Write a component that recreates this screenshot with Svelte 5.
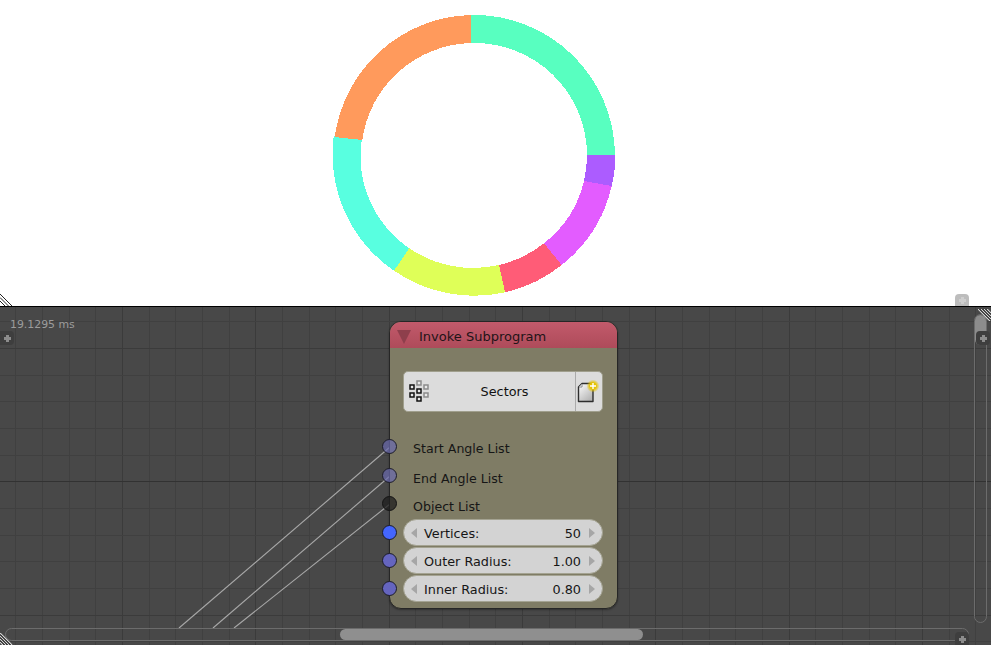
<script>
  const segments = [
    { c: '#58ffc0', d: 'M471 15 A141 141 0 0 1 615 155 L587 155 A113 112 0 0 0 471 43 Z' },
    { c: '#ac5cff', d: 'M615 155 Q615.500 171 611.700 186 L584 181 Q587 168 587 155 Z' },
    { c: '#e35cff', d: 'M611.700 186 A141 141 0 0 1 561.700 265 L544 243.300 A113 112 0 0 0 584 181 Z' },
    { c: '#ff5c77', d: 'M561.700 265 A141 141 0 0 1 505 292.300 L499 265 A113 112 0 0 0 544 243.300 Z' },
    { c: '#dfff58', d: 'M505 292.300 A141 141 0 0 1 394 270.700 L409.300 248.300 A113 112 0 0 0 499 265 Z' },
    { c: '#58ffe0', d: 'M394 270.700 A141 141 0 0 1 333.700 136 L361.700 140 A113 112 0 0 0 409.300 248.300 Z' },
    { c: '#ff9a5c', d: 'M334.700 137 A141 141 0 0 1 471 15 L471 43 A113 112 0 0 0 362.300 140 Z' }
  ];

  // Grid positions in the coordinates of the editor, whose top is y = 307.
  const step = 80 / 3;
  const vLines = Array.from({ length: 38 }, (_, i) => {
    const x = Math.round(15.3 + step * i);
    return { x, major: i % 5 === 4 };
  });
  const hLines = Array.from({ length: 13 }, (_, i) => {
    const y = Math.round(321.3 + step * i) - 307;
    return { y, major: i % 5 === 1, heavy: i === 6 };
  });

  const wires = [
    [83, 140, 179, 321],
    [83, 169, 213, 321],
    [83, 197, 234, 321]
  ];
  const squares = [
    { x: 13, y: 9, off: true },
    { x: 6, y: 13 },
    { x: 13, y: 17 },
    { x: 20, y: 13, off: true },
    { x: 6, y: 21 },
    { x: 20, y: 21, off: true },
    { x: 13, y: 25 }
  ];
  const sliders = [
    { label: 'Vertices:', value: '50', socket: 'blue' },
    { label: 'Outer Radius:', value: '1.00', socket: 'violet' },
    { label: 'Inner Radius:', value: '0.80', socket: 'violet' }
  ];
</script>

<div class="screen">
  <section class="viewport">
    <svg class="ring" width="991" height="306" viewBox="0 0 991 306" shape-rendering="crispEdges">
      {#each segments as s}
        <path d={s.d} fill={s.c} />
      {/each}
    </svg>
    <svg class="hatch hatch-viewport" width="12" height="12" viewBox="0 0 12 12">
      <path d="M0 0 L12 12 M0 3.500 L8.500 12 M0 7 L5 12" stroke="#222" stroke-width="1" fill="none" />
    </svg>
    <div class="handle"><span class="plus light"></span></div>
  </section>

  <section class="editor">
    <svg class="grid" width="991" height="338" viewBox="0 0 991 338" shape-rendering="crispEdges">
      {#each vLines as l}
        <line x1={l.x + 0.5} y1="0" x2={l.x + 0.5} y2="338" stroke={l.major ? '#3b3b3b' : '#404040'} />
      {/each}
      {#each hLines as l}
        <line x1="0" y1={l.y + 0.5} x2="991" y2={l.y + 0.5} stroke={l.heavy ? '#323232' : l.major ? '#3b3b3b' : '#404040'} />
      {/each}
    </svg>

    <svg class="wires" width="991" height="338" viewBox="0 0 991 338">
      {#each wires as w}
        <line x1={w[0] + 307} y1={w[1]} x2={w[2]} y2={w[3]} stroke="#a8a8a8" stroke-width="1.100" />
      {/each}
    </svg>

    <div class="timing">19.1295 ms</div>

    <article class="node">
      <header class="node-head">
        <span class="collapse"></span>
        <span class="title">Invoke Subprogram</span>
      </header>
      <div class="node-body">
        <div class="picker">
          <svg class="tree-icon" width="30" height="39" viewBox="0 0 30 39">
            {#each squares as q}
              <rect x={q.x} y={q.y} width="4" height="4" fill="#e8e8e8" stroke={q.off ? '#8a8a8a' : '#111'} stroke-width="1.500" />
            {/each}
          </svg>
          <span class="picker-name">Sectors</span>
          <span class="picker-new">
            <svg width="26" height="39" viewBox="0 0 26 39">
              <defs>
                <linearGradient id="page" x1="0" y1="0" x2="0.700" y2="1">
                  <stop offset="0" stop-color="#ffffff" />
                  <stop offset="1" stop-color="#b4b4b4" />
                </linearGradient>
                <radialGradient id="glow">
                  <stop offset="0.500" stop-color="#e6c300" />
                  <stop offset="1" stop-color="#e6c300" stop-opacity="0" />
                </radialGradient>
              </defs>
              <path d="M6 11.500 H17 V29.500 H2.500 V15 Z" fill="url(#page)" stroke="#2e2e2e" stroke-width="1.400" stroke-linejoin="round" />
              <path d="M3 15 L6 15 L6 12" fill="#fff" stroke="#8a8a8a" stroke-width="1" />
              <circle cx="17" cy="14" r="6.500" fill="url(#glow)" />
              <path d="M17 11 V17 M14 14 H20" stroke="#fff" stroke-width="1.400" />
            </svg>
          </span>
        </div>

        <div class="row row-first"><span class="socket faint"></span>Start Angle List</div>
        <div class="row row-second"><span class="socket faint"></span>End Angle List</div>
        <div class="row row-third"><span class="socket dark"></span>Object List</div>

        <div class="sliders">
          {#each sliders as s}
            <div class="row-slider">
              <span class="socket {s.socket}"></span>
              <div class="slider">
                <span class="arrow left"></span>
                <span class="slider-label">{s.label}</span>
                <span class="slider-value">{s.value}</span>
                <span class="arrow right"></span>
              </div>
            </div>
          {/each}
        </div>
      </div>
    </article>

    <div class="scroll-v"><div class="thumb-v"></div></div>
    <div class="scroll-h"><div class="thumb-h"></div></div>

    <div class="corner corner-left"><span class="plus"></span></div>
    <div class="corner corner-right"><span class="plus"></span></div>
    <div class="corner corner-bottom"><span class="plus"></span></div>

    <svg class="hatch hatch-top" width="13" height="12" viewBox="0 0 13 12">
      <path d="M0 0 L13 13 M3 0 L13 10 M6 0 L13 7 M9 0 L13 4" stroke="#d8d8d8" stroke-width="1.200" fill="none" />
      <path d="M1.500 0 L13 11.500 M4.500 0 L13 8.500 M7.500 0 L13 5.500" stroke="#111" stroke-width="1" fill="none" />
    </svg>
    <svg class="hatch hatch-bottom" width="13" height="12" viewBox="0 0 13 12">
      <path d="M0 0 L12 12 M0 3 L9 12 M0 6 L6 12 M0 9 L3 12" stroke="#d8d8d8" stroke-width="1.200" fill="none" />
      <path d="M0 1.500 L10.500 12 M0 4.500 L7.500 12 M0 7.500 L4.500 12" stroke="#111" stroke-width="1" fill="none" />
    </svg>
  </section>
</div>

<style>
  :global(body) {
    margin: 0;
    background: #fff;
    overflow: hidden;
  }

  .screen {
    width: 991px;
    height: 645px;
    display: flex;
    flex-direction: column;
    font-family: "DejaVu Sans", sans-serif;
    font-size: 13px;
    color: #111;
    overflow: hidden;
  }

  .viewport {
    position: relative;
    height: 306px;
    background: #fff;
    flex: none;
  }

  .ring {
    position: absolute;
    left: 0;
    top: 0;
  }

  .handle {
    position: absolute;
    left: 955px;
    top: 294px;
    width: 14px;
    height: 12px;
    background: #bdbdbd;
    border-radius: 4px 4px 0 0;
    display: flex;
    align-items: center;
    justify-content: center;
  }

  .editor {
    position: relative;
    flex: 1;
    background: #484848;
    border-top: 1px solid #000;
    height: 338px;
  }

  .grid,
  .wires {
    position: absolute;
    left: 0;
    top: 0;
  }

  .hatch {
    position: absolute;
  }

  .hatch-viewport {
    left: 0;
    bottom: 0;
  }

  .hatch-top {
    right: 0;
    top: 2px;
  }

  .hatch-bottom {
    left: 0;
    bottom: 0;
  }

  .timing {
    position: absolute;
    left: 10px;
    top: 11px;
    font-size: 10.900px;
    line-height: 13px;
    color: #9c9c9c;
  }

  .node {
    position: absolute;
    left: 389px;
    top: 14px;
    width: 229px;
    height: 288px;
    box-sizing: border-box;
    border: 1px solid #262626;
    border-radius: 12px;
    background: #7f7c65;
    box-shadow: 0 1px 2px rgba(0, 0, 0, 0.35);
  }

  .node-head {
    height: 26px;
    box-sizing: border-box;
    padding-top: 3px;
    display: flex;
    align-items: center;
    background: linear-gradient(#c25a6b, #ae4b5a);
    border-radius: 11px 11px 0 0;
  }

  .collapse {
    width: 0;
    height: 0;
    margin-left: 7px;
    border-left: 7px solid transparent;
    border-right: 7px solid transparent;
    border-top: 14px solid #8e3f4c;
  }

  .title {
    margin-left: 8px;
    color: #1f1418;
    font-size: 13px;
    line-height: 23px;
    white-space: nowrap;
  }

  .node-body {
    padding: 23px 14px 0 13px;
    display: flex;
    flex-direction: column;
  }

  .picker {
    height: 41px;
    box-sizing: border-box;
    display: flex;
    align-items: center;
    background: #dcdcdc;
    border: 1px solid #a09f8d;
    border-radius: 5px;
  }

  .tree-icon {
    flex: none;
  }

  .picker-name {
    flex: 1;
    text-align: center;
    font-size: 12.800px;
  }

  .picker-new {
    flex: none;
    width: 26px;
    height: 39px;
    border-left: 1px solid #aaa;
    display: flex;
  }

  .row {
    position: relative;
    height: 28px;
    line-height: 30px;
    padding-left: 10px;
    color: #161616;
    font-size: 12.600px;
  }

  .row-first {
    margin-top: 22px;
  }

  .row-second {
    margin-top: 2px;
  }

  .row-third {
    height: 27px;
    line-height: 29px;
  }

  .socket {
    position: absolute;
    left: -21px;
    top: 5px;
    width: 15px;
    height: 15px;
    box-sizing: border-box;
    border-radius: 50%;
    border: 1px solid #1c1c28;
  }

  .row-first .socket {
    top: 5px;
  }

  .row-second .socket {
    top: 4px;
  }

  .row-third .socket {
    top: 4px;
  }

  .faint {
    background: rgba(105, 105, 175, 0.7);
  }

  .dark {
    background: rgba(30, 30, 30, 0.75);
    border-color: #141414;
  }

  .blue {
    background: #4466ff;
  }

  .violet {
    background: #6565bf;
  }

  .sliders {
    display: flex;
    flex-direction: column;
    gap: 1px;
  }

  .row-slider {
    position: relative;
    height: 27px;
  }

  .row-slider .socket {
    top: 6px;
  }

  .slider {
    height: 27px;
    box-sizing: border-box;
    padding: 0 7px;
    display: flex;
    align-items: center;
    background: #d3d3d3;
    border: 1px solid #a4a392;
    border-radius: 14px;
    color: #161616;
    font-size: 12.800px;
  }

  .slider-label {
    flex: 1;
    margin-left: 7px;
    padding-top: 2px;
  }

  .slider-value {
    margin-right: 8px;
    padding-top: 2px;
  }

  .arrow {
    flex: none;
    width: 0;
    height: 0;
    border-top: 5px solid transparent;
    border-bottom: 5px solid transparent;
  }

  .arrow.left {
    border-right: 6px solid #a6a6a6;
  }

  .arrow.right {
    border-left: 6px solid #a6a6a6;
  }

  .scroll-v {
    position: absolute;
    left: 974px;
    top: 7px;
    width: 13px;
    height: 309px;
    box-sizing: border-box;
    border: 1px solid #6c6c6c;
    border-radius: 7px;
  }

  .thumb-v {
    height: 30px;
    background: #8c8c8c;
    border-radius: 6px;
  }

  .scroll-h {
    position: absolute;
    left: 5px;
    top: 321px;
    width: 964px;
    height: 13px;
    box-sizing: border-box;
    border: 1px solid #6c6c6c;
    border-radius: 7px;
  }

  .thumb-h {
    margin-left: 334px;
    width: 303px;
    height: 11px;
    background: #8f8f8f;
    border-radius: 6px;
  }

  .corner {
    position: absolute;
    width: 14px;
    height: 14px;
    background: #3e3e3e;
    display: flex;
    align-items: center;
    justify-content: center;
  }

  .corner-left {
    left: 0;
    top: 24px;
    border-radius: 0 4px 4px 0;
  }

  .corner-right {
    left: 976px;
    top: 24px;
    border-radius: 4px;
  }

  .corner-bottom {
    left: 955px;
    top: 325px;
    border-radius: 4px 4px 0 0;
  }

  .plus {
    position: relative;
    display: block;
    width: 7px;
    height: 7px;
    background:
      linear-gradient(#8c8c8c, #8c8c8c) center / 7px 3px no-repeat,
      linear-gradient(#8c8c8c, #8c8c8c) center / 3px 7px no-repeat;
  }

  .plus.light {
    background:
      linear-gradient(#cfcfcf, #cfcfcf) center / 7px 3px no-repeat,
      linear-gradient(#cfcfcf, #cfcfcf) center / 3px 7px no-repeat;
  }
</style>
